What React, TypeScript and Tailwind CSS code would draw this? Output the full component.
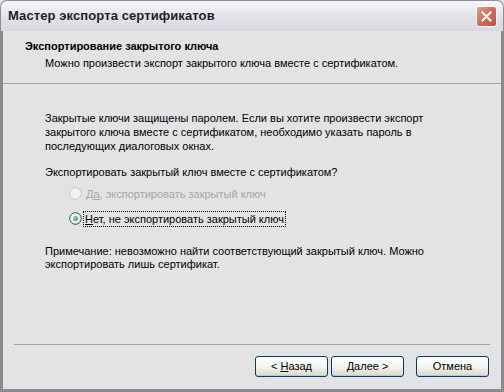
import React from "react";

function Radio({ checked, disabled }: { checked?: boolean; disabled?: boolean }) {
  return (
    <svg width="13" height="13" viewBox="0 0 13 13" className="shrink-0">
      <defs>
        <radialGradient id="rg" cx="0.35" cy="0.35" r="0.8">
          <stop offset="0" stopColor="#ffffff" />
          <stop offset="1" stopColor="#dcdad2" />
        </radialGradient>
        <radialGradient id="dot" cx="0.4" cy="0.4" r="0.6">
          <stop offset="0" stopColor="#a9e0a0" />
          <stop offset="1" stopColor="#3a9a3a" />
        </radialGradient>
      </defs>
      <circle
        cx="6.5"
        cy="6.5"
        r="5.8"
        fill={disabled ? "#f2f2ee" : "url(#rg)"}
        stroke={disabled ? "#c9c9c3" : "#1c5180"}
        strokeWidth="1"
      />
      {checked && <circle cx="6.5" cy="6.5" r="2.4" fill="url(#dot)" />}
    </svg>
  );
}

function XpButton({ children }: { children: React.ReactNode }) {
  return (
    <button className="w-[73px] h-[21px] rounded-[3px] border border-[#003c74] bg-gradient-to-b from-[#ffffff] via-[#f4f4f0] to-[#d9d7cc] text-[11px] text-black flex items-center justify-center shadow-[inset_0_-1px_0_#c8c5b8]">
      {children}
    </button>
  );
}

export default function App() {
  return (
    <div
      className="w-[504px] h-[392px] bg-[#e3e3e3] flex flex-col overflow-hidden text-black"
      style={{ fontFamily: "Tahoma, 'Liberation Sans', Arial, sans-serif" }}
    >
      {/* TITLE BAR */}
      <div className="h-[31px] shrink-0 rounded-t-[7px] border border-b-0 border-[#8d8d93] bg-gradient-to-b from-[#f6f6f9] via-[#e4e3ea] to-[#d8d7e0] flex items-center justify-between pl-[7px] pr-[6px]">
        <span className="text-[13px] font-semibold tracking-[0.1px] text-[#1f1f1f]">
          Мастер экспорта сертификатов
        </span>
        <div className="w-[21px] h-[21px] rounded-[3px] border border-white bg-gradient-to-br from-[#e89a88] via-[#d26c58] to-[#bb5242] flex items-center justify-center">
          <svg width="11" height="11" viewBox="0 0 11 11">
            <path d="M1.5 1.5 L9.5 9.5 M9.5 1.5 L1.5 9.5" stroke="#ffffff" strokeWidth="2" strokeLinecap="square" />
          </svg>
        </div>
      </div>

      {/* WINDOW BODY */}
      <div className="flex-1 flex flex-col border-x-[3px] border-b-[3px] border-[#8a8a8f]">
        {/* HEADER */}
        <div className="h-[53px] shrink-0 pl-[22px] pt-[8px] border-b border-[#a6a6a6]">
          <p className="text-[11px] font-bold leading-[14px]">Экспортирование закрытого ключа</p>
          <p className="text-[11px] leading-[14px] pl-[20px] mt-[3px]">
            Можно произвести экспорт закрытого ключа вместе с сертификатом.
          </p>
        </div>

        {/* CONTENT */}
        <div className="flex-1 pl-[42px] pr-[40px] pt-[27px] text-[11px] leading-[14px]">
          <p>
            Закрытые ключи защищены паролем. Если вы хотите произвести экспорт закрытого ключа вместе с
            сертификатом, необходимо указать пароль в последующих диалоговых окнах.
          </p>
          <p className="mt-[12px]">Экспортировать закрытый ключ вместе с сертификатом?</p>

          <div className="pl-[24px] mt-[8px] flex flex-col gap-[12px]">
            <div className="flex items-center gap-[4px] h-[13px] text-[#a8a8a3]">
              <Radio disabled />
              <span>
                <span className="underline">Да,</span> экспортировать закрытый ключ
              </span>
            </div>
            <div className="flex items-center gap-[2px] h-[13px]">
              <Radio checked />
              <span className="outline outline-1 outline-dotted outline-black px-[1px]">
                <span className="underline">Н</span>ет, не экспортировать закрытый ключ
              </span>
            </div>
          </div>

          <p className="mt-[20px] leading-[13px]">
            Примечание: невозможно найти соответствующий закрытый ключ. Можно экспортировать лишь
            сертификат.
          </p>
        </div>

        {/* FOOTER */}
        <div className="mx-[11px] border-t border-[#a6a6a6]" />
        <div className="h-[44px] shrink-0 flex items-center justify-end pr-[12px] pb-[1px]">
          <div className="flex gap-[3px]">
            <XpButton>
              &lt; <span className="underline ml-[3px]">Н</span>азад
            </XpButton>
            <XpButton>
              <span className="underline">Д</span>алее &gt;
            </XpButton>
          </div>
          <div className="ml-[12px]">
            <XpButton>Отмена</XpButton>
          </div>
        </div>
      </div>
    </div>
  );
}
